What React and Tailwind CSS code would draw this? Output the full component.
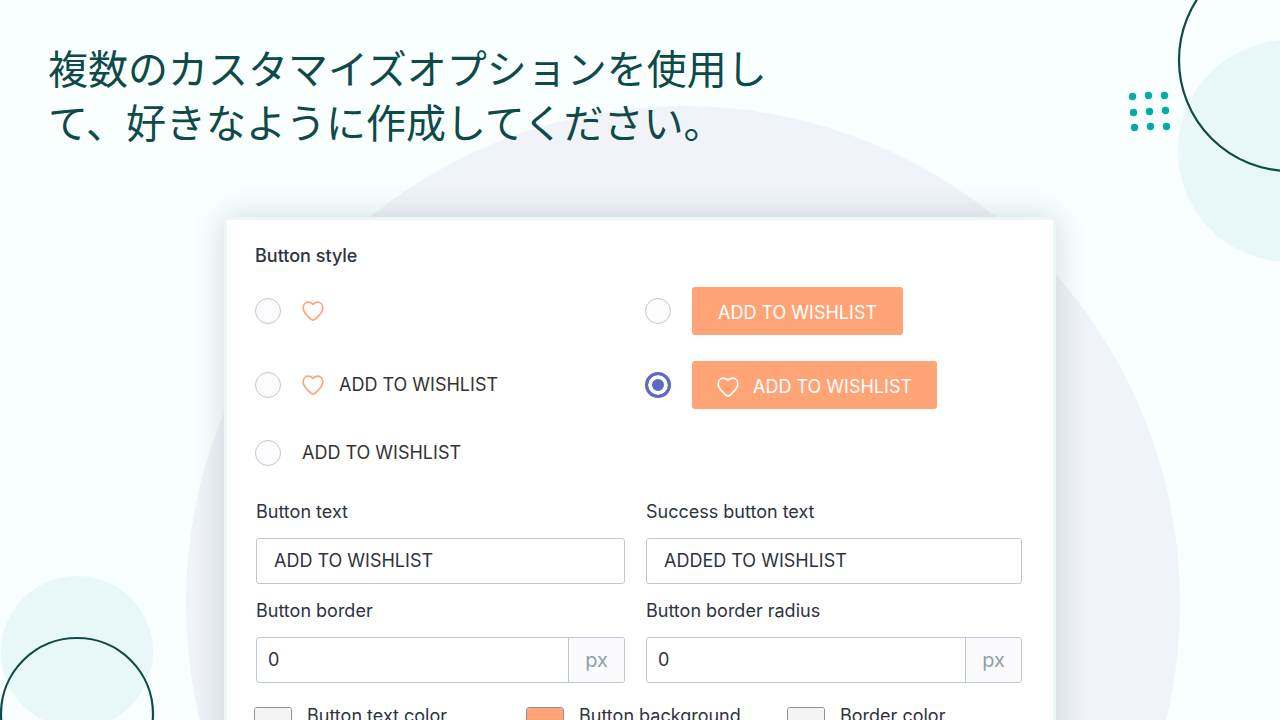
const HEART = "M11 19.2C10 18.9 1.2 12.8 1.2 7C1.2 3.6 3.5 1.2 6.3 1.2C8.4 1.2 9.8 1.9 11 3.4C12.2 1.9 13.6 1.2 15.7 1.2C18.5 1.2 20.8 3.6 20.8 7C20.8 12.8 12 18.9 11 19.2Z";

const DOTS = [
  [1132, 96], [1148, 95], [1164, 95],
  [1133, 112], [1149, 111], [1165, 110],
  [1134, 127], [1150, 126], [1166, 126],
];

function Heart({ className }) {
  return (
    <svg className={`w-[22px] h-5 shrink-0 ${className}`} viewBox="0 0 22 20" fill="none" stroke="currentColor" strokeWidth="1.7" strokeLinejoin="round" aria-hidden="true">
      <path d={HEART} />
    </svg>
  );
}

function Backdrop() {
  return (
    <div className="absolute inset-0 overflow-hidden" aria-hidden="true">
      <svg className="absolute left-1/2 top-0 -translate-x-1/2" width="1280" height="1120" viewBox="0 0 1280 1120" fill="none">
        <circle cx="683" cy="603" r="497" fill="#f0f3f8" />
        <circle cx="1289" cy="151" r="111" fill="#e8f8f8" />
        <circle cx="1290" cy="60" r="111" stroke="#0f4a48" strokeWidth="2.2" />
        <circle cx="77" cy="652" r="76" fill="#e8f8f8" />
        <circle cx="77" cy="714" r="76" stroke="#0f4a48" strokeWidth="2.2" />
        {DOTS.map(([x, y]) => (
          <circle key={`${x}-${y}`} cx={x + 0.5} cy={y + 0.5} r="3.7" fill="#06a9a3" />
        ))}
      </svg>
    </div>
  );
}

function StyleOption({ id, checked, iconLabel, children }) {
  return (
    <div className="flex items-center gap-[21px]">
      <input
        type="radio"
        id={id}
        name="button-style"
        defaultChecked={checked}
        aria-label={iconLabel}
        className="appearance-none w-[26px] h-[26px] shrink-0 rounded-full border border-[#bfc6d2] bg-[#fcfcfe] checked:border-[3px] checked:border-[#5c6ac4] checked:bg-[#5c6ac4] checked:shadow-[inset_0_0_0_4px_white]"
      />
      <label htmlFor={id} className="flex items-center">{children}</label>
    </div>
  );
}

function Field({ id, label, value, unit }) {
  return (
    <div>
      <label htmlFor={id} className="block leading-6 mb-[14px]">{label}</label>
      <div className="flex h-[46px] rounded-[3px] border border-[#bdc9d5] bg-white overflow-hidden">
        <input
          id={id}
          type="text"
          defaultValue={value}
          className={`flex-1 min-w-0 outline-none ${unit ? "px-[11px]" : "px-[17px]"}`}
        />
        {unit && (
          <span className="w-14 flex items-center justify-center border-l border-[#bdc9d5] bg-[#fbfbfd] text-xl text-[#919eab]">
            {unit}
          </span>
        )}
      </div>
    </div>
  );
}

function Swatch({ id, label, value }) {
  return (
    <div className="flex items-start gap-[15px]">
      <input
        id={id}
        type="color"
        defaultValue={value}
        className="appearance-none w-[38px] h-[38px] p-0 rounded-[3px] border border-[#8f9499] overflow-hidden [&::-webkit-color-swatch-wrapper]:p-0 [&::-webkit-color-swatch]:border-0"
      />
      <label htmlFor={id} className="leading-[18px]">{label}</label>
    </div>
  );
}

export default function App() {
  return (
    <main className="relative h-screen overflow-hidden bg-[#f8fffe]">
      <Backdrop />
      <div className="relative">
        <h1 lang="ja" className="pt-10 pl-12 text-[40px] leading-[54px] text-[#0f4a48] font-['Noto_Sans_CJK_JP','Noto_Sans',sans-serif]">
          複数のカスタマイズオプションを使用し<br />て、好きなように作成してください。
        </h1>

        <form className="w-[65%] mx-auto mt-[69px] pt-6 pb-10 border-[3px] border-[#eef7f8] rounded-md bg-white shadow-[0_0_32px_rgba(40,60,60,0.18)] text-lg text-[#2d3340] font-['Inter',sans-serif]">
          <fieldset className="px-7">
            <legend className="leading-6 mb-[19px] font-medium">Button style</legend>
            <div className="grid grid-cols-[390fr_380fr] grid-rows-[48px_48px_36px] gap-y-[26px] text-[#333]">
              <StyleOption id="style-icon" iconLabel="Icon only">
                <Heart className="text-[#ffa477]" />
              </StyleOption>
              <StyleOption id="style-solid">
                <span className="h-12 px-[26px] pt-1 flex items-center rounded-[3px] bg-[#ffa477] text-white">ADD TO WISHLIST</span>
              </StyleOption>
              <StyleOption id="style-icon-text">
                <Heart className="text-[#ffa477] mr-[15px]" />ADD TO WISHLIST
              </StyleOption>
              <StyleOption id="style-solid-icon" checked>
                <span className="h-12 px-[25px] pt-1 flex items-center rounded-[3px] bg-[#ffa477] text-white">
                  <Heart className="mr-[14px]" />ADD TO WISHLIST
                </span>
              </StyleOption>
              <StyleOption id="style-text">ADD TO WISHLIST</StyleOption>
            </div>
          </fieldset>

          <div className="grid grid-cols-[369fr_376fr] gap-x-[21px] gap-y-[15px] mt-[29px] pl-[29px] pr-[31px]">
            <Field id="text" label="Button text" value="ADD TO WISHLIST" />
            <Field id="success" label="Success button text" value="ADDED TO WISHLIST" />
            <Field id="border" label="Button border" value="0" unit="px" />
            <Field id="radius" label="Button border radius" value="0" unit="px" />
          </div>

          <div className="grid grid-cols-[272fr_261fr_235fr] mt-6 pl-[27px] pr-[31px]">
            <Swatch id="text-color" label="Button text color" value="#f4f4f4" />
            <Swatch id="background" label="Button background" value="#ffa477" />
            <Swatch id="border-color" label="Border color" value="#f4f4f4" />
          </div>
        </form>
      </div>
    </main>
  );
}
